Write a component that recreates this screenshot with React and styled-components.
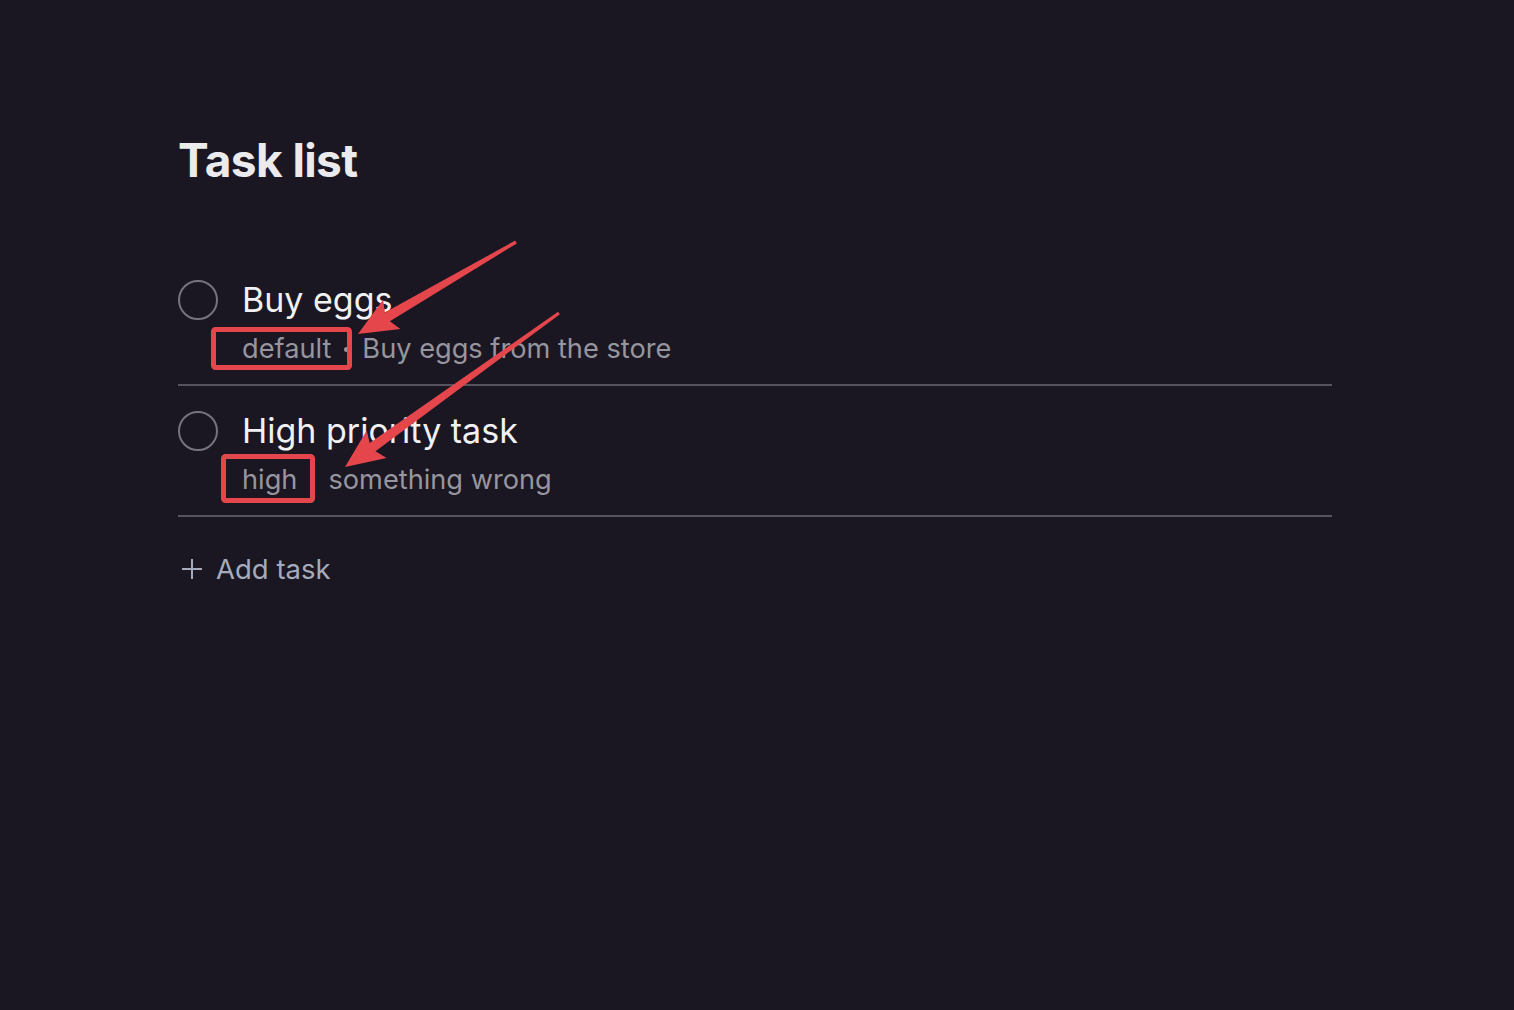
import styled, { createGlobalStyle } from "styled-components";

const GlobalStyle = createGlobalStyle`
  html, body {
    margin: 0;
    padding: 0;
    background: #1a1723;
  }
  body {
    font-family: Inter, "Noto Sans", sans-serif;
    -webkit-font-smoothing: antialiased;
  }
`;

const Page = styled.div`
  position: relative;
  min-height: 1010px;
  background: #1a1723;
  padding: 128px 182px 0 178px;
  box-sizing: border-box;
`;

const Title = styled.h1`
  margin: 0 0 63px 0;
  font-size: 46px;
  font-weight: 700;
  letter-spacing: -0.6px;
  color: #ebebed;
  line-height: 64px;
`;

const TaskList = styled.div`
  display: flex;
  flex-direction: column;
`;

const TaskRow = styled.div`
  display: flex;
  align-items: flex-start;
  gap: 24px;
  padding: 25px 0 15px 0;
  border-bottom: 2px solid #55535c;
`;

const Check = styled.div`
  flex: none;
  width: 40px;
  height: 40px;
  box-sizing: border-box;
  border: 2px solid #75737b;
  border-radius: 50%;
`;

const TaskBody = styled.div`
  display: flex;
  flex-direction: column;
  gap: 9px;
`;

const TaskTitle = styled.div`
  font-size: 34px;
  line-height: 40px;
  color: #f1f1f3;
`;

const TaskMeta = styled.div`
  display: flex;
  align-items: center;
  gap: 13px;
  font-size: 27.2px;
  line-height: 40px;
  color: #97959d;
`;

const Dot = styled.span`
  width: 5px;
  height: 5px;
  border-radius: 50%;
  background: #97959d;
`;

const AddTask = styled.button`
  display: flex;
  align-items: center;
  gap: 13px;
  margin-top: 32px;
  padding: 0 0 0 3px;
  background: none;
  border: none;
  font-family: inherit;
  font-size: 27.5px;
  line-height: 40px;
  color: #a5abbd;
  cursor: pointer;
`;

const Overlay = styled.svg`
  position: absolute;
  left: 0;
  top: 0;
  width: 1514px;
  height: 1010px;
  pointer-events: none;
`;

const tasks = [
  { id: 1, title: "Buy eggs", tag: "default", note: "Buy eggs from the store" },
  { id: 2, title: "High priority task", tag: "high", note: "something wrong" },
];

// annotation arrow: thin tail widening toward a barbed head
function arrowPoints(tx, ty, px, py) {
  const dx = px - tx;
  const dy = py - ty;
  const len = Math.hypot(dx, dy);
  const ux = dx / len;
  const uy = dy / len;
  const nx = -uy;
  const ny = ux;
  const headLen = 39;
  const headW = 17;
  const tailW = 1.6;
  const baseW = 5;
  const bx = px - ux * headLen;
  const by = py - uy * headLen;
  const pts = [
    [tx + nx * tailW, ty + ny * tailW],
    [bx + ux * 5 + nx * baseW, by + uy * 5 + ny * baseW],
    [bx + nx * headW, by + ny * headW],
    [px, py],
    [bx - nx * headW, by - ny * headW],
    [bx + ux * 5 - nx * baseW, by + uy * 5 - ny * baseW],
    [tx - nx * tailW, ty - ny * tailW],
  ];
  return pts.map((p) => p.map((v) => v.toFixed(1)).join(",")).join(" ");
}

export default function App() {
  return (
    <Page>
      <GlobalStyle />
      <Title>Task list</Title>
      <TaskList>
        {tasks.map((t) => (
          <TaskRow key={t.id}>
            <Check />
            <TaskBody>
              <TaskTitle>{t.title}</TaskTitle>
              <TaskMeta>
                <span>{t.tag}</span>
                <Dot />
                <span>{t.note}</span>
              </TaskMeta>
            </TaskBody>
          </TaskRow>
        ))}
      </TaskList>
      <AddTask>
        <svg width="22" height="22" viewBox="0 0 22 22">
          <path d="M11 1v20M1 11h20" stroke="#a5abbd" strokeWidth="2" />
        </svg>
        Add task
      </AddTask>

      <Overlay viewBox="0 0 1514 1010">
        <rect x="213.5" y="329.5" width="136" height="38" rx="2" fill="none" stroke="#e5464c" strokeWidth="5" />
        <rect x="223.5" y="456.5" width="89" height="44" rx="2" fill="none" stroke="#e5464c" strokeWidth="5" />
        <polygon points={arrowPoints(516, 242, 358, 334)} fill="#e5464c" strokeLinejoin="round" />
        <polygon points={arrowPoints(559, 313, 345, 467)} fill="#e5464c" strokeLinejoin="round" />
      </Overlay>
    </Page>
  );
}
